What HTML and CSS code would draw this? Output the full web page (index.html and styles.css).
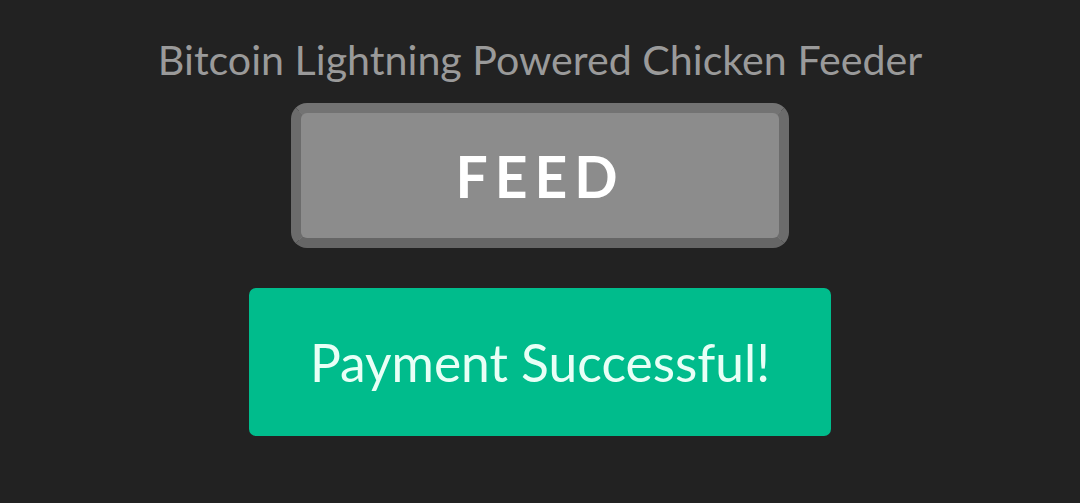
FILE: index.html
```html
<!DOCTYPE html>
<html lang="en">
<head>
    <meta charset="UTF-8">
    <meta name="viewport" content="width=device-width, initial-scale=1.0">
    <title>Chicken Feeder</title>
    <link rel="stylesheet" href="styles.css">
</head>
<body>
    <div class="container">
        <h1 class="title">Bitcoin Lightning Powered Chicken Feeder</h1>

        <button class="feed-button">FEED</button>

        <div class="alert-success">Payment Successful!</div>
    </div>
</body>
</html>
```

FILE: styles.css
```css
body {
    font-family: 'Lato', 'Liberation Sans', sans-serif;
    margin: 0;
    padding: 0;
    background-color: #222;
}

.container {
    display: flex;
    flex-direction: column;
    align-items: center;
    padding-top: 35px;
}

.title {
    margin: 0;
    font-size: 41.2px;
    font-weight: 400;
    line-height: 1.2;
    color: #9a9a9a;
}

.feed-button {
    margin-top: 19px;
    width: 498px;
    height: 145px;
    display: flex;
    align-items: center;
    justify-content: center;
    background-color: #8c8c8c;
    border: 10px solid #6e6e6e;
    border-color: #737373 #6c6c6c #666 #6c6c6c;
    border-radius: 16px;
    color: #fff;
    font-family: 'Lato', 'Liberation Sans', sans-serif;
    font-size: 57px;
    font-weight: 700;
    letter-spacing: 7px;
    padding: 0;
    cursor: pointer;
}

.alert-success {
    margin-top: 40px;
    width: 582px;
    height: 148px;
    display: flex;
    align-items: center;
    justify-content: center;
    background-color: #00bc8c;
    border-radius: 7px;
    color: #e8fff6;
    font-size: 51.5px;
    font-weight: 400;
}
```
